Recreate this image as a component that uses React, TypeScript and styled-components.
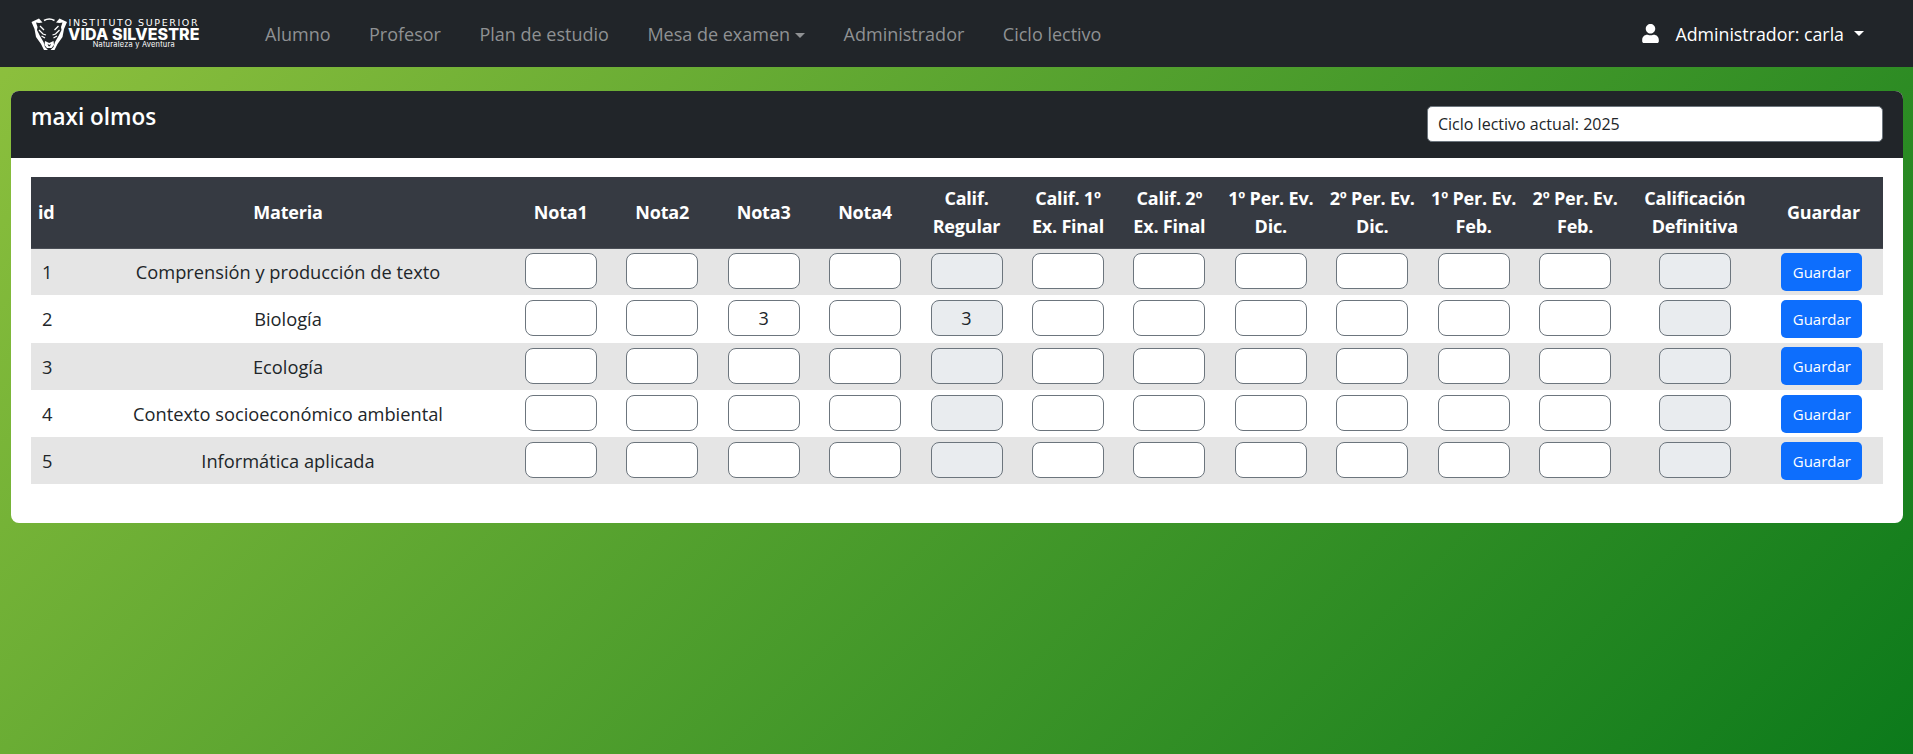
import React from 'react';
import styled, { createGlobalStyle } from 'styled-components';
import { FaUser } from 'react-icons/fa';

const subjects = [
  { id: 1, name: 'Comprensión y producción de texto', nota3: '', regular: '' },
  { id: 2, name: 'Biología', nota3: '3', regular: '3' },
  { id: 3, name: 'Ecología', nota3: '', regular: '' },
  { id: 4, name: 'Contexto socioeconómico ambiental', nota3: '', regular: '' },
  { id: 5, name: 'Informática aplicada', nota3: '', regular: '' },
];

const headers = [
  ['Nota1'],
  ['Nota2'],
  ['Nota3'],
  ['Nota4'],
  ['Calif.', 'Regular'],
  ['Calif. 1º', 'Ex. Final'],
  ['Calif. 2º', 'Ex. Final'],
  ['1º Per. Ev.', 'Dic.'],
  ['2º Per. Ev.', 'Dic.'],
  ['1º Per. Ev.', 'Feb.'],
  ['2º Per. Ev.', 'Feb.'],
];

const navLinks = ['Alumno', 'Profesor', 'Plan de estudio', 'Mesa de examen', 'Administrador', 'Ciclo lectivo'];

const GlobalStyle = createGlobalStyle`
  html, body {
    margin: 0;
    padding: 0;
  }
  body {
    min-height: 754px;
    font-family: "Open Sans", "Liberation Sans", sans-serif;
    color: #212529;
    background: linear-gradient(135deg, #8fc13e 0%, #0c7a1b 100%);
  }
`;

const Navbar = styled.nav`
  height: 67px;
  background: #212529;
  display: flex;
  align-items: center;
  padding: 0 49px 0 31px;
`;

const Logo = styled.div`
  width: 170px;
  height: 36px;
  display: flex;
  align-items: center;
  color: #fff;
  margin-right: 64px;
`;

const LogoText = styled.div`
  display: flex;
  flex-direction: column;
  align-items: center;
  white-space: nowrap;
`;

const LogoTop = styled.span`
  font: 400 9.5px/8px "DejaVu Sans", sans-serif;
  letter-spacing: 1.6px;
`;

const LogoMain = styled.span`
  font: 800 16px/14px "Inter", sans-serif;
  letter-spacing: 0.1px;
`;

const LogoSub = styled.span`
  font: 400 7.4px/7px "Inter", sans-serif;
  letter-spacing: 0.25px;
`;

const NavLinks = styled.div`
  display: flex;
  gap: 38.5px;
  flex: 1;
`;

const NavLink = styled.a`
  font-size: 18px;
  color: #8f9193;
  white-space: nowrap;
`;

const Caret = styled.span<{ $gap?: number }>`
  display: inline-block;
  margin-left: ${(p) => p.$gap ?? 5}px;
  vertical-align: 3px;
  border-top: 5px solid currentColor;
  border-left: 5px solid transparent;
  border-right: 5px solid transparent;
`;

const UserMenu = styled.div`
  display: flex;
  align-items: center;
  color: #fff;
  font-size: 17.8px;
  white-space: nowrap;
`;

const UserIcon = styled(FaUser)`
  font-size: 19px;
  margin-right: 15px;
`;

const Main = styled.main`
  padding: 24px 10px 0 11px;
`;

const Card = styled.section`
  background: #fff;
  border-radius: 8px;
  overflow: hidden;
  height: 432px;
`;

const CardHeader = styled.header`
  height: 67px;
  box-sizing: border-box;
  background: #212529;
  display: flex;
  justify-content: space-between;
  align-items: flex-start;
  padding: 15px 20px 0;
`;

const Title = styled.h2`
  margin: -1px 0 0;
  font-size: 22.5px;
  line-height: 24px;
  font-weight: 600;
  color: #fff;
`;

const CycleInput = styled.input`
  width: 456px;
  height: 36px;
  box-sizing: border-box;
  border: 1px solid #6c757d;
  border-radius: 5px;
  background: #fff;
  padding: 0 10px;
  font: 400 16px "Open Sans", sans-serif;
  color: #212529;
`;

const CardBody = styled.div`
  padding: 19px 20px;
`;

const Table = styled.table`
  width: 1852px;
  table-layout: fixed;
  border-collapse: collapse;
`;

const HeadRow = styled.tr`
  background: #363a42;
  height: 71px;
  border-bottom: 1px solid #4b4f57;
`;

const Th = styled.th<{ $width: number; $left?: boolean }>`
  box-sizing: border-box;
  width: ${(p) => p.$width}px;
  padding: 0 0 0 ${(p) => (p.$left ? '7px' : '0')};
  color: #fff;
  font-size: 18px;
  letter-spacing: -0.2px;
  line-height: 28px;
  font-weight: 700;
  text-align: ${(p) => (p.$left ? 'left' : 'center')};
  white-space: nowrap;
`;

const Row = styled.tr`
  height: 47.3px;
  &:nth-child(odd) {
    background: #e5e5e5;
  }
`;

const Td = styled.td`
  padding: 0;
  font-size: 18.25px;
  text-align: center;
`;

const IdCell = styled(Td)`
  text-align: left;
  padding-left: 11px;
`;

const GradeInput = styled.input`
  display: block;
  width: 72px;
  height: 36px;
  margin: 0 auto 1px;
  box-sizing: border-box;
  border: 1px solid #6c757d;
  border-radius: 8px;
  background: #fff;
  text-align: center;
  padding: 0;
  font: 400 18px "Open Sans", sans-serif;
  color: #212529;
  &:disabled {
    background: #e9ecef;
    color: #212529;
    opacity: 1;
  }
`;

const SaveButton = styled.button`
  display: block;
  width: 81px;
  height: 38px;
  margin: 0 0 0 17.5px;
  border: 0;
  border-radius: 5px;
  background: #0d6efd;
  color: #fff;
  padding: 0;
  font: 400 15px "Open Sans", sans-serif;
`;

// jaguar head from the logo, white marks on the dark navbar
const PantherLogo = () => (
  <svg width="37" height="34" viewBox="0 0 37 34" style={{ flexShrink: 0 }}>
    <path
      fill="#fff"
      d="M0.5 5 L8 1.5 L11.5 5.5 L8 6 L5 5.5 L6.5 10 L6 13 L9 19 L12.5 25 L14 30 L17 33 L13 33 L10 27 L5 20 L3.5 12 Z"
    />
    <path
      fill="#fff"
      d="M36 5 L28.5 1.5 L25 5.5 L28.5 6 L31.5 5.5 L30 10 L30.5 13 L27.5 19 L24 25 L22.5 30 L19.5 33 L23.5 33 L26.5 27 L31.5 20 L33 12 Z"
    />
    <path fill="none" stroke="#fff" strokeWidth="1.6" d="M13 3.5 Q18.3 0.5 23.5 3.5" />
    <path
      fill="none"
      stroke="#fff"
      strokeWidth="1.3"
      d="M9 9 L13 13 M8 13 L12 17 L15 18 M10.5 19 L14 21 M27.5 9 L23.5 13 M28.5 13 L24.5 17 L21.5 18 M26 19 L22.5 21"
    />
    <path fill="#fff" d="M14 24 L18.2 26 L22.5 24 L23 28 L20.5 31 L16 31 L13.5 28 Z" />
    <path fill="#212529" d="M16.5 26.8 L18.2 28 L20 26.8 L19 29.3 L17.5 29.3 Z" />
  </svg>
);

const App = () => (
  <>
    <GlobalStyle />
    <Navbar>
      <Logo>
        <PantherLogo />
        <LogoText>
          <LogoTop>INSTITUTO SUPERIOR</LogoTop>
          <LogoMain>VIDA SILVESTRE</LogoMain>
          <LogoSub>Naturaleza y Aventura</LogoSub>
        </LogoText>
      </Logo>
      <NavLinks>
        {navLinks.map((link) => (
          <NavLink key={link}>
            {link}
            {link === 'Mesa de examen' && <Caret />}
          </NavLink>
        ))}
      </NavLinks>
      <UserMenu>
        <UserIcon />
        Administrador: carla
        <Caret $gap={10} />
      </UserMenu>
    </Navbar>
    <Main>
      <Card>
        <CardHeader>
          <Title>maxi olmos</Title>
          <CycleInput readOnly value="Ciclo lectivo actual: 2025" />
        </CardHeader>
        <CardBody>
          <Table>
            <thead>
              <HeadRow>
                <Th $width={35} $left>id</Th>
                <Th $width={444}>Materia</Th>
                {headers.map((lines, i) => (
                  <Th key={i} $width={101.45}>
                    {lines.map((line, j) => (
                      <React.Fragment key={j}>
                        {j > 0 && <br />}
                        {line}
                      </React.Fragment>
                    ))}
                  </Th>
                ))}
                <Th $width={138}>Calificación<br />Definitiva</Th>
                <Th $width={119}>Guardar</Th>
              </HeadRow>
            </thead>
            <tbody>
              {subjects.map((subject) => (
                <Row key={subject.id}>
                  <IdCell>{subject.id}</IdCell>
                  <Td>{subject.name}</Td>
                  {headers.map((lines, i) => {
                    const value = i === 2 ? subject.nota3 : i === 4 ? subject.regular : '';
                    return (
                      <Td key={i}>
                        <GradeInput readOnly value={value} disabled={i === 4} />
                      </Td>
                    );
                  })}
                  <Td><GradeInput disabled value="" readOnly /></Td>
                  <Td><SaveButton>Guardar</SaveButton></Td>
                </Row>
              ))}
            </tbody>
          </Table>
        </CardBody>
      </Card>
    </Main>
  </>
);

export default App;
